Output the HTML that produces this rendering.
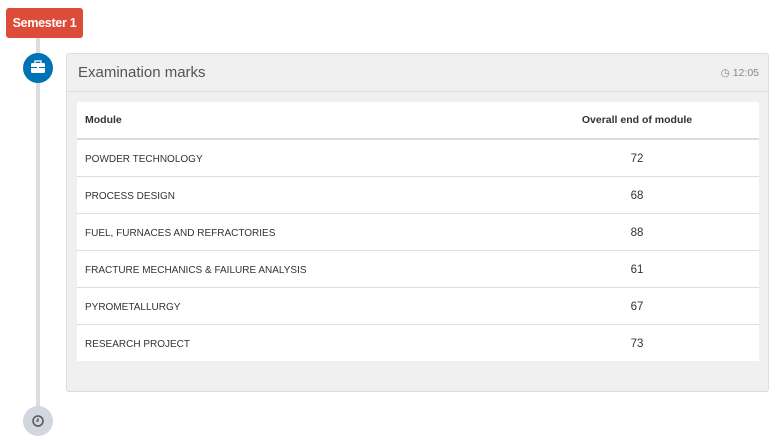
<!DOCTYPE html>
<html><head><style>
body{margin:0;width:784px;height:445px;background:#fff;font-family:"Liberation Sans",sans-serif;position:relative;overflow:hidden}
.badge{position:absolute;left:6px;top:8px;width:77px;height:30px;background:#dd4b39;border-radius:3px;color:#fff;font-weight:bold;font-size:12.5px;line-height:30px;text-align:center;letter-spacing:-0.3px}
.line{position:absolute;left:36px;top:38px;width:4px;height:372px;background:#ddd}
.c1{position:absolute;left:23px;top:53px;width:30px;height:30px;border-radius:50%;background:#0073b7}
.c2{position:absolute;left:23px;top:406px;width:30px;height:30px;border-radius:50%;background:#d2d6de}
.panel{position:absolute;left:66px;top:53px;width:701px;height:337px;background:#f0f0f0;border:1px solid #ddd;border-radius:3px}
.hdr{height:37px;border-bottom:1px solid #ddd;position:relative}
.hdr .t{position:absolute;left:11px;top:10px;font-size:15px;color:#555}
.hdr .tm{position:absolute;right:9px;top:13px;font-size:10.5px;color:#888}
table{position:absolute;left:10px;top:48px;width:682px;border-collapse:collapse;background:#fff}
th{height:36px;font-size:10.5px;color:#333;text-align:left;padding:0 8px;border-bottom:2px solid #ddd;font-weight:bold}
td{height:34px;font-size:10px;color:#333;padding:2px 8px 0;border-bottom:1px solid #ddd;text-transform:uppercase;box-sizing:content-box}
tr:last-child td{border-bottom:none}
th.n,td.n{text-align:center;width:228px;font-size:11.5px}
th.n{font-size:10.5px}
</style></head><body>
<div class="badge">Semester 1</div>
<div class="line"></div>
<div class="c1"><svg width="30" height="30"><rect x="8" y="10" width="14" height="10" rx="1.5" fill="#fff"/><rect x="12" y="8" width="6" height="3" fill="none" stroke="#fff" stroke-width="1.3"/><rect x="8" y="14" width="14" height="1" fill="#0073b7"/><rect x="14" y="13.5" width="2" height="2" fill="#fff"/></svg></div>
<div class="c2"><svg width="30" height="30"><circle cx="15" cy="15" r="5" fill="none" stroke="#555" stroke-width="1.5"/><path d="M15 12v3h-2" stroke="#555" stroke-width="1.2" fill="none"/></svg></div>
<div class="panel">
<div class="hdr"><span class="t">Examination marks</span><span class="tm">◷ 12:05</span></div>
<table>
<tr><th>Module</th><th class="n">Overall end of module</th></tr>
<tr><td>Powder Technology</td><td class="n">72</td></tr>
<tr><td>Process Design</td><td class="n">68</td></tr>
<tr><td>Fuel, Furnaces and Refractories</td><td class="n">88</td></tr>
<tr><td>Fracture Mechanics &amp; Failure Analysis</td><td class="n">61</td></tr>
<tr><td>Pyrometallurgy</td><td class="n">67</td></tr>
<tr><td>Research Project</td><td class="n">73</td></tr>
</table>
</div>
</body></html>
